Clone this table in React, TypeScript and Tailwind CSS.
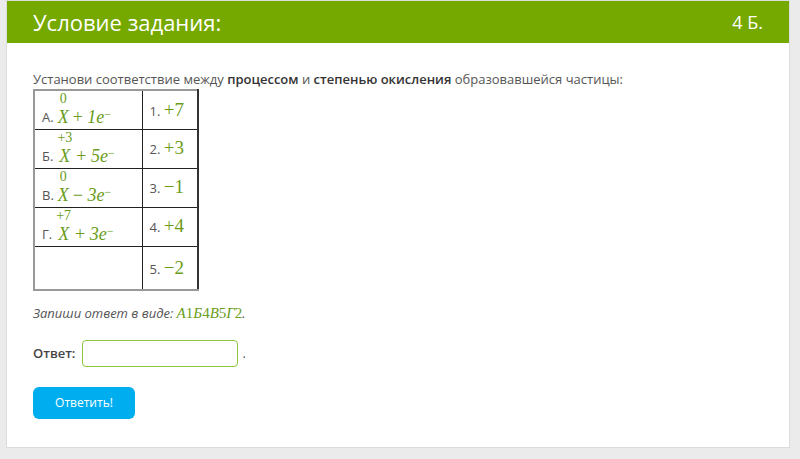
import React from 'react';

const math = "font-['Liberation_Serif','DejaVu_Serif',serif] text-[#6a9c1a]";

const rows = [
  { l: 'А.', top: '0', op: '+', n: '1', r: '1.', v: '+7' },
  { l: 'Б.', top: '+3', op: '+', n: '5', r: '2.', v: '+3' },
  { l: 'В.', top: '0', op: '−', n: '3', r: '3.', v: '−1' },
  { l: 'Г.', top: '+7', op: '+', n: '3', r: '4.', v: '+4' },
];

const App: React.FC = () => {
  return (
    <div className="min-h-[459px] w-[800px] bg-[#ebebeb] pt-[1px] font-['Open_Sans',sans-serif] text-[13px] text-[#555]">
      <div className="mx-[7px] h-[446px] w-[782px] bg-white shadow-[0_0_0_1px_#dcdcdc]">
        <div className="flex h-[42px] items-center justify-between bg-[#76a900] px-[26px] text-white">
          <span className="text-[22px]">Условие задания:</span>
          <span className="text-[18px]">4 Б.</span>
        </div>
        <div className="px-[26px] pt-[26px]">
          <p className="leading-[20px]">
            Установи соответствие между <b className="font-semibold text-[#333]">процессом</b> и{' '}
            <b className="font-semibold text-[#333]">степенью окисления</b> образовавшейся частицы:
          </p>
          <table className="w-[164px] table-fixed border-collapse border-2 border-l-[#999] border-t-[#999] border-r-[#333] border-b-[#999]">
            <colgroup>
              <col className="w-[108px]" />
              <col className="w-[56px]" />
            </colgroup>
            <tbody>
              {rows.map((row) => (
                <tr key={row.l} className="h-[39px]">
                  <td className="whitespace-nowrap border border-[#222] pl-[7px] align-bottom">
                    <div className="flex items-end pb-[2px]">
                      <span className="mr-[4px] leading-[19px]">{row.l}</span>
                      <span className={`${math} inline-flex flex-col items-center`}>
                        <span className="text-[14px] leading-[15.5px]">{row.top}</span>
                        <i className="text-[18px] leading-[20px]">X</i>
                      </span>
                      <span className={`${math} ml-[4px] text-[18px] leading-[20px]`}>
                        {row.op} <i>{row.n}e</i>
                        <sup className="relative -top-[5px] text-[12px]">−</sup>
                      </span>
                    </div>
                  </td>
                  <td className="whitespace-nowrap border border-[#222] px-[7px]">
                    {row.r} <span className={`${math} text-[19px]`}>{row.v}</span>
                  </td>
                </tr>
              ))}
              <tr className="h-[44px]">
                <td className="border border-[#222]"></td>
                <td className="whitespace-nowrap border border-[#222] px-[7px]">
                  5. <span className={`${math} text-[19px]`}>−2</span>
                </td>
              </tr>
            </tbody>
          </table>
          <p className="mt-[12px] italic leading-[20px]">
            Запиши ответ в виде:{' '}
            <span className={`${math} not-italic text-[15px]`}>
              <i>А</i>1<i>Б</i>4<i>В</i>5<i>Г</i>2
            </span>
            .
          </p>
          <div className="mt-[17px] flex items-center">
            <span className="font-semibold text-[#444]">Ответ:</span>
            <input className="ml-[7px] h-[27px] w-[156px] rounded-[4px] border border-[#8dc63f] outline-none" />
            <span className="ml-[4px]">.</span>
          </div>
          <button className="mt-[20px] h-[32px] w-[102px] rounded-[6px] bg-[#00aeef] text-[12px] text-white">
            Ответить!
          </button>
        </div>
      </div>
    </div>
  );
};

export default App;
